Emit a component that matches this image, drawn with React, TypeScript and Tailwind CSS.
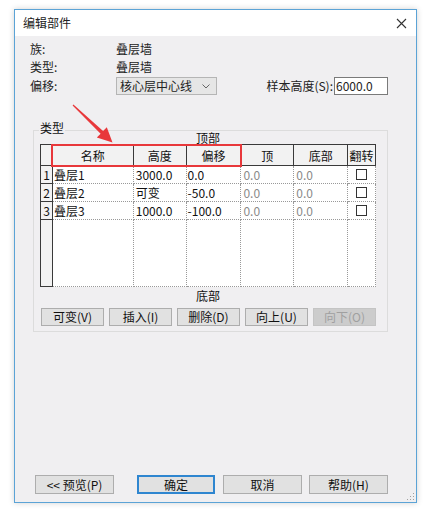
import React from 'react';

const font = "font-['Noto_Sans_CJK_SC','Noto_Sans',sans-serif]";

const cols = [12, 81, 53, 55, 53, 54, 28];

type Row = { n: string; name: string; h: string; off: string };

const rows: Row[] = [
  { n: '1', name: '叠层1', h: '3000.0', off: '0.0' },
  { n: '2', name: '叠层2', h: '可变', off: '-50.0' },
  { n: '3', name: '叠层3', h: '1000.0', off: '-100.0' },
];

function Checkbox() {
  return <div className="mx-auto h-[11px] w-[11px] border border-[#333] bg-white" />;
}

function LayerTable() {
  const headers = ['名称', '高度', '偏移', '顶', '底部', '翻转'];
  return (
    <div className="w-[336px] border-l border-t border-[#3a3a3a] bg-white text-[12px] leading-[17px]">
      <div className="flex h-[21px]">
        <div style={{ width: cols[0] }} className="border-b border-r border-[#3a3a3a] bg-[#f2f2f2]" />
        {headers.map((h, i) => (
          <div
            key={h}
            style={{ width: cols[i + 1] }}
            className="flex items-center justify-center border-b border-r border-[#3a3a3a] bg-[#f2f2f2] text-[#111]"
          >
            {h}
          </div>
        ))}
      </div>
      {rows.map((r) => (
        <div key={r.n} className="flex h-[18px]">
          <div style={{ width: cols[0] }} className="flex items-center justify-center border-b border-r border-[#3a3a3a] bg-[#f2f2f2] text-[#111]">
            {r.n}
          </div>
          <div style={{ width: cols[1] }} className="flex items-center border-b border-r border-dotted border-[#999] pl-[1px] text-[#111]">
            {r.name}
          </div>
          <div style={{ width: cols[2] }} className="flex items-center border-b border-r border-dotted border-[#999] pl-[2px] text-[#111]">
            {r.h}
          </div>
          <div style={{ width: cols[3] }} className="flex items-center border-b border-r border-dotted border-[#999] pl-[1px] text-[#111]">
            {r.off}
          </div>
          <div style={{ width: cols[4] }} className="flex items-center border-b border-r border-dotted border-[#999] pl-[2px] text-[#8a8a8a]">
            0.0
          </div>
          <div style={{ width: cols[5] }} className="flex items-center border-b border-r border-dotted border-[#999] pl-[2px] text-[#8a8a8a]">
            0.0
          </div>
          <div style={{ width: cols[6] }} className="flex items-center border-b border-r border-dotted border-[#999]">
            <Checkbox />
          </div>
        </div>
      ))}
      <div className="flex h-[67px]">
        <div style={{ width: cols[0] }} className="border-b border-r border-[#3a3a3a] bg-[#f2f2f2]" />
        {cols.slice(1).map((w, i) => (
          <div key={i} style={{ width: w }} className="border-b border-r border-dotted border-[#999]" />
        ))}
      </div>
    </div>
  );
}

function SmallButton({ label, disabled }: { label: string; disabled?: boolean }) {
  return (
    <div
      className={
        disabled
          ? 'flex h-[18px] w-[63px] items-center justify-center border border-[#c4c4c4] bg-[#cccccc] text-[12px] text-[#a0a0a0]'
          : 'flex h-[18px] w-[63px] items-center justify-center border border-[#adadad] bg-[#e1e1e1] text-[12px] text-[#111]'
      }
    >
      {label}
    </div>
  );
}

function DialogButton({ label, primary, w = 79 }: { label: string; primary?: boolean; w?: number }) {
  return (
    <div
      style={{ width: w }}
      className={
        primary
          ? 'flex h-[19px] items-center justify-center border-2 border-[#2f86d0] bg-[#e1e1e1] text-[12px] text-[#111]'
          : 'flex h-[19px] items-center justify-center border border-[#adadad] bg-[#e1e1e1] text-[12px] text-[#111]'
      }
    >
      {label}
    </div>
  );
}

export default function App() {
  return (
    <div className={`relative h-[512px] w-[436px] overflow-hidden bg-white pl-[14px] pt-[9px] ${font}`}>
      <div className="flex h-[494px] w-[403px] flex-col border border-[#5ba3d6] bg-[#f0eff1] shadow-[0_0_6px_rgba(0,0,0,0.18)]">
        {/* title bar */}
        <div className="flex h-[26px] items-center justify-between bg-white pl-[8px] pr-[8px]">
          <span className="text-[12px] text-[#222]">编辑部件</span>
          <svg width="11" height="11" viewBox="0 0 11 11" className="mr-[1px]">
            <path d="M1 1L10 10M10 1L1 10" stroke="#333" strokeWidth="1.1" />
          </svg>
        </div>

        {/* info */}
        <div className="mt-[4px] pl-[15px] pr-[28px] text-[12px] text-[#222]">
          <div className="flex h-[18px] items-center">
            <span className="w-[86px]">族:</span>
            <span>叠层墙</span>
          </div>
          <div className="flex h-[18px] items-center">
            <span className="w-[86px]">类型:</span>
            <span>叠层墙</span>
          </div>
          <div className="mt-[1px] flex h-[18px] items-center">
            <span className="w-[86px]">偏移:</span>
            <div className="flex h-[18px] w-[101px] items-center justify-between border border-[#b5b5b5] bg-[#e6e6e6] pl-[3px] pr-[6px]">
              <span>核心层中心线</span>
              <svg width="8" height="5" viewBox="0 0 8 5">
                <path d="M0.5 0.5L4 4L7.5 0.5" fill="none" stroke="#666" strokeWidth="1" />
              </svg>
            </div>
            <span className="ml-auto mr-[1px] whitespace-nowrap">样本高度(S):</span>
            <div className="flex h-[18px] w-[54px] items-center border border-[#7a7a7a] bg-white pl-[1px]">6000.0</div>
          </div>
        </div>

        {/* group box */}
        <div className="relative ml-[18px] mt-[35px] w-[355px] border border-[#dcdcdc] pb-[5px] pl-[6px] text-[12px] text-[#111]">
          <span className="absolute left-[5px] top-[-11px] bg-[#f0eff1] px-[1px] leading-[16px]">类型</span>
          <div className="w-[336px] text-center leading-[13px]">顶部</div>
          <LayerTable />
          <div className="flex h-[18px] w-[336px] items-center justify-center">底部</div>
          <div className="mt-[3px] flex gap-[5px] pl-[1px]">
            <SmallButton label="可变(V)" />
            <SmallButton label="插入(I)" />
            <SmallButton label="删除(D)" />
            <SmallButton label="向上(U)" />
            <SmallButton label="向下(O)" disabled />
          </div>
        </div>

        {/* bottom buttons */}
        <div className="mt-auto mb-[8px] flex pl-[20px]">
          <DialogButton label="<< 预览(P)" />
          <div className="ml-[23px]">
            <DialogButton label="确定" primary w={78} />
          </div>
          <div className="ml-[8px]">
            <DialogButton label="取消" />
          </div>
          <div className="ml-[7px]">
            <DialogButton label="帮助(H)" />
          </div>
        </div>
      </div>

      {/* resize grip */}
      <svg width="8" height="8" viewBox="0 0 8 8" className="absolute left-[407px] top-[493px]">
        <rect x="6" y="0" width="1" height="1" fill="#a0a0a0" />
        <rect x="3" y="3" width="1" height="1" fill="#a0a0a0" />
        <rect x="6" y="3" width="1" height="1" fill="#a0a0a0" />
        <rect x="0" y="6" width="1" height="1" fill="#a0a0a0" />
        <rect x="3" y="6" width="1" height="1" fill="#a0a0a0" />
        <rect x="6" y="6" width="1" height="1" fill="#a0a0a0" />
      </svg>

      {/* annotation: red box + arrow */}
      <div className="pointer-events-none absolute left-[51px] top-[144px] h-[23px] w-[191px] border-2 border-[#e8383b]" />
      <svg width="436" height="512" className="pointer-events-none absolute left-0 top-0">
        <polygon
          points="72.6,105.4 100.6,133.8 96.8,137.6 112.5,142.5 106.8,127.2 103.1,131.0 73.4,104.6"
          fill="#e8383b"
        />
      </svg>
    </div>
  );
}
